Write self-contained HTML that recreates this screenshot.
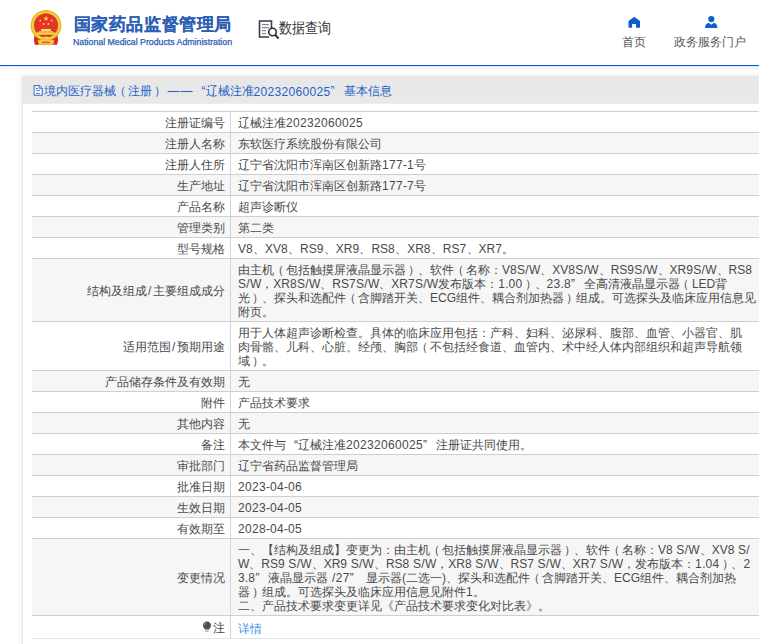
<!DOCTYPE html>
<html><head><meta charset="utf-8">
<style>
*{margin:0;padding:0;box-sizing:border-box}
html,body{width:759px;height:644px;overflow:hidden;background:#fff;font-family:"Liberation Sans",sans-serif;}
.abs{position:absolute}
#title{left:73.5px;top:14px;font-size:17px;font-weight:bold;-webkit-text-stroke:0.1px #2d60b5;color:#2d60b5;white-space:nowrap;line-height:22px;letter-spacing:0.62px}
#sub{left:73px;top:37px;font-size:8.75px;color:#2b5db3;-webkit-text-stroke:0.25px #2b5db3;white-space:nowrap;line-height:11px}
#sj{left:279px;top:18px;font-size:15px;color:#333;white-space:nowrap;line-height:20px;transform-origin:0 0;transform:scaleX(0.87)}
.nav{font-size:12px;color:#555;white-space:nowrap;line-height:14px}
#bline{left:0;top:65px;width:759px;height:1px;background:#0a5cc6;box-shadow:0 0.5px 0 rgba(10,92,198,0.25)}
#hatch{left:0;top:66px}
#panel{left:22px;top:76px;width:800px;height:600px;background:#fff;border-left:1px solid #e7e7e7;box-shadow:0 0 6px rgba(0,0,0,0.10)}
#ph{left:22px;top:76px;width:800px;height:28px;background:#e8e8e8;border-bottom:1px solid #e9eef4}
#pht{left:44px;top:84px;font-size:12px;color:#2463c6;white-space:nowrap;line-height:14px}
.row{position:absolute;left:32px;width:760px;border-top:1px solid #cfcfcf}
.row.g{background:#f6f6f6}
.row.last{border-bottom:1px solid #e2e4ec}
.lab{position:absolute;left:0;width:199px;top:1px;bottom:0;border-right:1px solid #d4d4d4;padding-right:5.5px;font-size:12px;color:#4a4a4a;white-space:nowrap;line-height:14px;display:flex;align-items:center;justify-content:flex-end}
.row .lab{top:0;padding-top:1px}
.lab>*{}
.val{position:absolute;left:206px;top:3.5px;font-size:12px;color:#4a4a4a;white-space:nowrap;line-height:14px}
.d{letter-spacing:0.33px;position:relative;top:0.7px}
.l{position:relative;top:0.7px}
.sl{position:relative;top:0.7px;margin:0 0.3px}
.ql{display:inline-block;width:12px;text-align:right}
.qr{display:inline-block;width:13px;text-align:left}
.pl{display:inline-block;width:12px;text-indent:-2.5px}
.pr{display:inline-block;width:12px;text-indent:2.3px}
.dash{display:inline-block;margin-left:3.5px;letter-spacing:1px}
.link{color:#3d8fe8;top:5.5px}
.bulb{margin-right:1px;margin-top:-1px}
.lab .sl{margin:0 1.1px}

</style></head><body>
<svg class="abs" style="left:29px;top:9px" width="34" height="38" viewBox="29 9 34 38">
  <path d="M34.5 35 Q33.2 40 34.8 44.8 L57.2 44.8 Q58.8 40 57.5 35 Z" fill="#e0261c"/>
  <circle cx="46" cy="25.4" r="15.4" fill="#eeb52c"/>
  <circle cx="46" cy="25.4" r="14" fill="#f7cf3c"/>
  <circle cx="46" cy="25.4" r="12.1" fill="#b8620f"/>
  <circle cx="46" cy="25.4" r="11.5" fill="#e6332a"/>
  <path d="M46 16 L46.7 17.7 L48.6 17.8 L47.1 19 L47.6 20.8 L46 19.8 L44.4 20.8 L44.9 19 L43.4 17.8 L45.3 17.7Z" fill="#f8d84a"/>
  <circle cx="40.3" cy="20.6" r="0.95" fill="#f8d84a"/>
  <circle cx="43.6" cy="24" r="0.95" fill="#f8d84a"/>
  <circle cx="48.4" cy="24" r="0.95" fill="#f8d84a"/>
  <circle cx="51.7" cy="20.6" r="0.95" fill="#f8d84a"/>
  <rect x="41" y="28.9" width="9.9" height="2.2" fill="#f8da6a"/>
  <rect x="39" y="31.1" width="14" height="1.2" fill="#f0c040"/>
  <rect x="36.7" y="32.3" width="18.4" height="2.4" fill="#f8d84a"/>
  <path d="M37.5 40.6 Q46 38.5 54.5 40.6 L53 44.8 L39 44.8Z" fill="#f3c540"/>
  <path d="M42 42.6 Q46 41.6 50 42.6" stroke="#e0261c" stroke-width="0.9" fill="none"/>
  <path d="M43 37.5 Q46 35.5 49 37.5 L48 39 L44 39Z" fill="#f6d04a"/>
</svg>
<div id="title" class="abs">国家药品监督管理局</div>
<div id="sub" class="abs">National Medical Products Administration</div>
<svg class="abs" style="left:258px;top:20px" width="22" height="21" viewBox="0 0 22 21">
  <path d="M11 17 H1.5 V1 H13.5 V8" fill="none" stroke="#3a3a4a" stroke-width="1.6"/>
  <rect x="4" y="4" width="7" height="1.2" fill="#888"/>
  <rect x="4" y="7" width="7" height="1.2" fill="#888"/>
  <rect x="4" y="10" width="4" height="1.2" fill="#888"/>
  <rect x="4" y="13" width="4" height="1.2" fill="#888"/>
  <circle cx="14.5" cy="12" r="3.8" fill="#fff" stroke="#2e2e40" stroke-width="1.6"/>
  <path d="M17.3 14.8 L20.5 18.5" stroke="#2e2e40" stroke-width="2"/>
</svg>
<div id="sj" class="abs">数据查询</div>
<svg class="abs" style="left:620px;top:10px" width="110" height="22" viewBox="620 10 110 22">
  <path d="M628.5 21.1 L634.3 16.7 L640 21.1 V27.8 H636 V23.9 H632.1 V27.8 H628.5Z" fill="#0b5fc8"/>
  <circle cx="711.3" cy="19.1" r="3.1" fill="#0b5fc8"/>
  <path d="M705 28.1 Q705.2 23.6 708.6 22.7 L711.3 24.8 L714 22.7 Q717.3 23.6 717.4 28.1Z" fill="#0b5fc8"/>
</svg>
<div class="abs nav" style="left:622px;top:34.5px">首页</div>
<div class="abs nav" style="left:674px;top:34.5px">政务服务门户</div>
<div id="bline" class="abs"></div>
<svg id="hatch" class="abs" width="759" height="4" viewBox="0 0 759 4"><defs><pattern id="hp" width="3" height="4" patternUnits="userSpaceOnUse"><path d="M0.6 3.0 L2.4 1.0" stroke="#d6d6d6" stroke-width="0.7"/></pattern></defs><rect width="759" height="4" fill="url(#hp)"/></svg>
<div id="panel" class="abs"></div>
<div id="ph" class="abs"></div>
<svg class="abs" style="left:30px;top:82px" width="14" height="16" viewBox="30 82 14 16">
  <path d="M34.1 85.6 H39.6 L42.3 88.4 V95.3 H34.1Z" fill="#f4f6fa" stroke="#2867c8" stroke-width="0.95"/>
  <path d="M39.4 85.8 V88.6 H42.2" fill="none" stroke="#2867c8" stroke-width="0.8"/>
  <rect x="36" y="88" width="2" height="0.9" fill="#2867c8"/>
  <rect x="36" y="90" width="4" height="0.9" fill="#4a7fd0"/>
  <rect x="36" y="93" width="4" height="0.9" fill="#4a7fd0"/>
</svg>
<div id="pht" class="abs">境内医疗器械<span class="pl">（</span>注册<span class="pr">）</span><span class="dash">——</span><span class="ql">“</span>辽械注准<span class="d">20232060025</span><span class="qr">”</span>基本信息</div>

<div class="row" style="top:111px;height:21px"><div class="lab">注册证编号</div><div class="val">辽械注准<span class="d">20232060025</span></div></div>
<div class="row g" style="top:132px;height:21px"><div class="lab">注册人名称</div><div class="val">东软医疗系统股份有限公司</div></div>
<div class="row" style="top:153px;height:21px"><div class="lab">注册人住所</div><div class="val">辽宁省沈阳市浑南区创新路<span class="d">177</span><span class="l">-</span><span class="d">1</span>号</div></div>
<div class="row g" style="top:174px;height:21px"><div class="lab">生产地址</div><div class="val">辽宁省沈阳市浑南区创新路<span class="d">177</span><span class="l">-</span><span class="d">7</span>号</div></div>
<div class="row" style="top:195px;height:21px"><div class="lab">产品名称</div><div class="val">超声诊断仪</div></div>
<div class="row g" style="top:216px;height:21px"><div class="lab">管理类别</div><div class="val">第二类</div></div>
<div class="row" style="top:237px;height:21px"><div class="lab">型号规格</div><div class="val"><span class="l">V</span><span class="d">8</span>、<span class="l">XV</span><span class="d">8</span>、<span class="l">RS</span><span class="d">9</span>、<span class="l">XR</span><span class="d">9</span>、<span class="l">RS</span><span class="d">8</span>、<span class="l">XR</span><span class="d">8</span>、<span class="l">RS</span><span class="d">7</span>、<span class="l">XR</span><span class="d">7</span>。</div></div>
<div class="row g" style="top:258px;height:63px"><div class="lab">结构及组成<span class="sl">/</span>主要组成成分</div><div class="val">由主机<span class="pl">（</span>包括触摸屏液晶显示器<span class="pr">）</span>、软件<span class="pl">（</span>名称：<span class="l">V</span><span class="d">8</span><span class="l">S</span><span class="sl">/</span><span class="l">W</span>、<span class="l">XV</span><span class="d">8</span><span class="l">S</span><span class="sl">/</span><span class="l">W</span>、<span class="l">RS</span><span class="d">9</span><span class="l">S</span><span class="sl">/</span><span class="l">W</span>、<span class="l">XR</span><span class="d">9</span><span class="l">S</span><span class="sl">/</span><span class="l">W</span>、<span class="l">RS</span><span class="d">8</span><br><span class="l">S</span><span class="sl">/</span><span class="l">W</span>，<span class="l">XR</span><span class="d">8</span><span class="l">S</span><span class="sl">/</span><span class="l">W</span>、<span class="l">RS</span><span class="d">7</span><span class="l">S</span><span class="sl">/</span><span class="l">W</span>、<span class="l">XR</span><span class="d">7</span><span class="l">S</span><span class="sl">/</span><span class="l">W</span>发布版本：<span class="d">1</span><span class="l">.</span><span class="d">00</span><span class="pr">）</span>、<span class="d">23</span><span class="l">.</span><span class="d">8</span><span class="qr">”</span>全高清液晶显示器<span class="pl">（</span><span class="l">LED</span>背<br>光<span class="pr">）</span>、探头和选配件<span class="pl">（</span>含脚踏开关、<span class="l">ECG</span>组件、耦合剂加热器<span class="pr">）</span>组成。可选探头及临床应用信息见<br>附页。</div></div>
<div class="row" style="top:321px;height:49px"><div class="lab">适用范围<span class="sl">/</span>预期用途</div><div class="val">用于人体超声诊断检查。具体的临床应用包括：产科、妇科、泌尿科、腹部、血管、小器官、肌<br>肉骨骼、儿科、心脏、经颅、胸部<span class="pl">（</span>不包括经食道、血管内、术中经人体内部组织和超声导航领<br>域<span class="pr">）</span>。</div></div>
<div class="row g" style="top:370px;height:21px"><div class="lab">产品储存条件及有效期</div><div class="val">无</div></div>
<div class="row" style="top:391px;height:21px"><div class="lab">附件</div><div class="val">产品技术要求</div></div>
<div class="row g" style="top:412px;height:21px"><div class="lab">其他内容</div><div class="val">无</div></div>
<div class="row" style="top:433px;height:21px"><div class="lab">备注</div><div class="val">本文件与<span class="ql">“</span>辽械注准<span class="d">20232060025</span><span class="qr">”</span>注册证共同使用。</div></div>
<div class="row g" style="top:454px;height:21px"><div class="lab">审批部门</div><div class="val">辽宁省药品监督管理局</div></div>
<div class="row" style="top:475px;height:21px"><div class="lab">批准日期</div><div class="val"><span class="d">2023</span><span class="l">-</span><span class="d">04</span><span class="l">-</span><span class="d">06</span></div></div>
<div class="row g" style="top:496px;height:21px"><div class="lab">生效日期</div><div class="val"><span class="d">2023</span><span class="l">-</span><span class="d">04</span><span class="l">-</span><span class="d">05</span></div></div>
<div class="row" style="top:517px;height:21px"><div class="lab">有效期至</div><div class="val"><span class="d">2028</span><span class="l">-</span><span class="d">04</span><span class="l">-</span><span class="d">05</span></div></div>
<div class="row g" style="top:538px;height:77px"><div class="lab">变更情况</div><div class="val">一、【结构及组成】变更为：由主机<span class="pl">（</span>包括触摸屏液晶显示器<span class="pr">）</span>、软件<span class="pl">（</span>名称：<span class="l">V</span><span class="d">8</span><span class="l"> S</span><span class="sl">/</span><span class="l">W</span>、<span class="l">XV</span><span class="d">8</span><span class="l"> S</span><span class="sl">/</span><br><span class="l">W</span>、<span class="l">RS</span><span class="d">9</span><span class="l"> S</span><span class="sl">/</span><span class="l">W</span>、<span class="l">XR</span><span class="d">9</span><span class="l"> S</span><span class="sl">/</span><span class="l">W</span>、<span class="l">RS</span><span class="d">8</span><span class="l"> S</span><span class="sl">/</span><span class="l">W</span>，<span class="l">XR</span><span class="d">8</span><span class="l"> S</span><span class="sl">/</span><span class="l">W</span>、<span class="l">RS</span><span class="d">7</span><span class="l"> S</span><span class="sl">/</span><span class="l">W</span>、<span class="l">XR</span><span class="d">7</span><span class="l"> S</span><span class="sl">/</span><span class="l">W</span>，发布版本：<span class="d">1</span><span class="l">.</span><span class="d">04</span><span class="pr">）</span>、<span class="d">2</span><br><span class="d">3</span><span class="l">.</span><span class="d">8</span><span class="qr">”</span>液晶显示器<span class="l"> </span><span class="sl">/</span><span class="d">27</span><span class="qr">”</span><span class="l"> </span>显示器<span class="l">(</span>二选一<span class="l">)</span>、探头和选配件<span class="pl">（</span>含脚踏开关、<span class="l">ECG</span>组件、耦合剂加热<br>器<span class="pr">）</span>组成。可选探头及临床应用信息见附件<span class="d">1</span>。<br>二、产品技术要求变更详见《产品技术要求变化对比表》。</div></div>
<div class="row last" style="top:615px;height:24px"><div class="lab"><svg class="bulb" width="10" height="12" viewBox="0 0 10 12"><path d="M5 0.6 C7.4 0.6 9 2.3 9 4.5 C9 6.4 7.6 7.6 6.9 8.6 H3.1 C2.4 7.6 1 6.4 1 4.5 C1 2.3 2.6 0.6 5 0.6Z" fill="#505050"/><path d="M3.3 9.6 H6.7 V10.4 H3.3Z" fill="#606060"/><path d="M2.6 4 Q2.8 2.4 4.3 1.9" stroke="#aaa" stroke-width="0.8" fill="none"/></svg>注</div><div class="val link">详情</div></div>
</body></html>
